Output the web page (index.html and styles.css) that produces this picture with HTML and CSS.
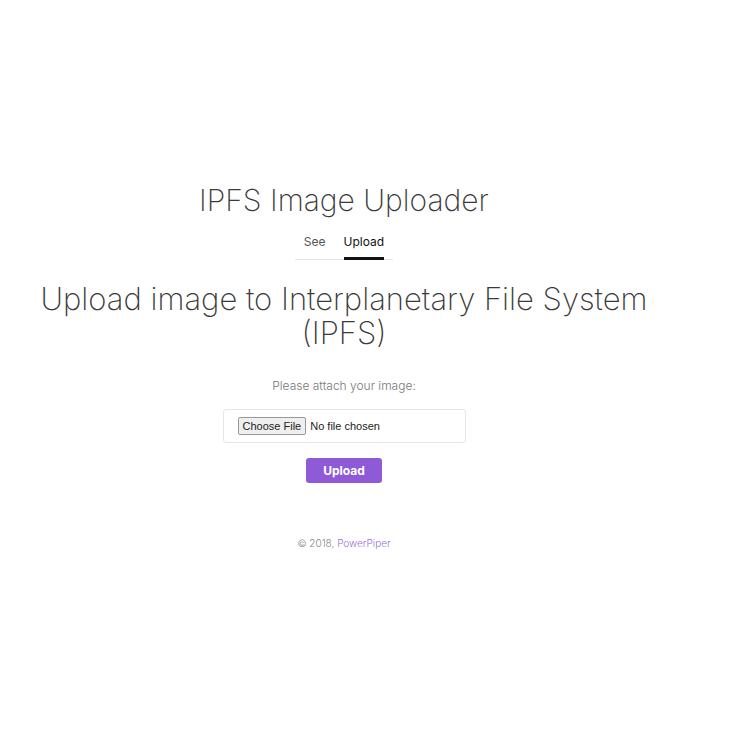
FILE: index.html
```html
<!DOCTYPE html>
<html>
<head>
<meta charset="utf-8">
<link rel="stylesheet" href="styles.css">
</head>
<body>
<div class="page">
  <h1 class="title">IPFS Image Uploader</h1>
  <nav class="tabs">
    <a class="tab">See</a>
    <a class="tab active">Upload</a>
  </nav>
  <h2 class="heading">Upload image to Interplanetary File System (IPFS)</h2>
  <form class="form">
    <p class="label">Please attach your image:</p>
    <div class="filebox">
      <span class="choose">Choose File</span>
      <span class="nofile">No file chosen</span>
    </div>
    <button type="button" class="upload">Upload</button>
  </form>
  <footer class="footer">© 2018, <span class="brand">PowerPiper</span></footer>
</div>
</body>
</html>
```
FILE: styles.css
```css
html, body { margin: 0; padding: 0; background: #fff; }
body { font-family: Inter, "Open Sans", sans-serif; color: #333; }
.page {
  width: 688px;
  display: flex;
  flex-direction: column;
  align-items: center;
  padding-top: 180px;
}
.title {
  margin: 0;
  font-size: 30px;
  font-weight: 250;
  line-height: 40px;
  color: #3a3a3a;
}
.tabs {
  display: flex;
  gap: 18px;
  margin-top: 12px;
  padding: 0 9px;
  border-bottom: 1px solid #e3e3e3;
}
.tab {
  font-size: 12px;
  color: #555;
  padding: 2px 0 8px;
  border-bottom: 3px solid transparent;
  margin-bottom: -1px;
}
.tab.active { color: #111; border-bottom-color: #111; }
.heading {
  margin: 22px 0 0;
  font-size: 31px;
  font-weight: 250;
  line-height: 34px;
  text-align: center;
  color: #3a3a3a;
  max-width: 660px;
}
.form {
  display: flex;
  flex-direction: column;
  align-items: center;
  margin-top: 28px;
}
.label {
  margin: 0;
  font-size: 12px;
  font-weight: 300;
  color: #777;
}
.filebox {
  margin-top: 16px;
  width: 227px;
  height: 32px;
  border: 1px solid #e6e6e6;
  border-radius: 3px;
  display: flex;
  align-items: center;
  padding-left: 14px;
  gap: 4px;
}
.choose {
  font-family: "Liberation Sans", Arial, sans-serif;
  font-size: 11px;
  color: #222;
  background: #efefef;
  border: 1px solid #999;
  border-radius: 2px;
  padding: 2px 4px;
}
.nofile {
  font-family: "Liberation Sans", Arial, sans-serif;
  font-size: 11px;
  color: #222;
}
.upload {
  margin-top: 15px;
  width: 76px;
  height: 25px;
  border: none;
  border-radius: 3px;
  background: #8e5ad8;
  color: #fff;
  font-family: Inter, sans-serif;
  font-weight: 700;
  font-size: 12px;
}
.footer {
  margin-top: 54px;
  font-size: 10px;
  font-weight: 300;
  color: #888;
}
.brand { color: #9a70d8; }
```
